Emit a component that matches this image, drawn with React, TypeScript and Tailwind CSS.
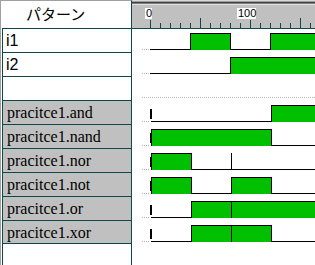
import React from "react"

type Step = [number, number]
interface Signal {
  name: string
  kind: "in" | "out" | "blank"
  steps?: Step[]
  glitch?: number[]
}

const signals: Signal[] = [
  { name: "i1", kind: "in", steps: [[0, 0], [40, 1], [80, 0], [120, 1]] },
  { name: "i2", kind: "in", steps: [[0, 0], [80, 1]] },
  { name: "", kind: "blank" },
  { name: "pracitce1.and", kind: "out", steps: [[1, 0], [121, 1]] },
  { name: "pracitce1.nand", kind: "out", steps: [[1, 1], [121, 0]] },
  { name: "pracitce1.nor", kind: "out", steps: [[1, 1], [41, 0]], glitch: [81] },
  { name: "pracitce1.not", kind: "out", steps: [[1, 1], [41, 0], [81, 1], [121, 0]] },
  { name: "pracitce1.or", kind: "out", steps: [[1, 0], [41, 1]], glitch: [81] },
  { name: "pracitce1.xor", kind: "out", steps: [[1, 0], [41, 1], [121, 0]], glitch: [81] },
]

const X0 = 150
const XEND = 315
const TOP0 = 28
const ROWH = 24

function Dots({ y, from, to }: { y: number; from: number; to: number }) {
  const d = []
  for (let x = from; x < to; x += 2) d.push(<rect key={x} x={x} y={y} width={1} height={1} fill="#b4b4b4" />)
  return <>{d}</>
}

function Wave({ sig, top }: { sig: Signal; top: number }) {
  const hi = top + 5
  const lo = top + 21
  if (sig.kind === "blank") return <Dots y={lo} from={142} to={XEND} />
  const steps = sig.steps!
  const green: React.ReactNode[] = []
  const black: React.ReactNode[] = []
  steps.forEach(([t, lvl], i) => {
    const x1 = X0 + t
    const x2 = i + 1 < steps.length ? X0 + steps[i + 1][0] : XEND
    if (lvl) {
      green.push(<rect key={"g" + i} x={x1} y={hi} width={x2 - x1} height={lo - hi + 1} fill="#00c000" />)
      black.push(<rect key={"t" + i} x={x1} y={hi} width={x2 - x1} height={1} fill="#000" />)
    } else {
      black.push(<rect key={"l" + i} x={x1} y={lo} width={x2 - x1} height={1} fill="#000" />)
    }
    if (i > 0 || lvl) black.push(<rect key={"v" + i} x={x1} y={hi} width={1} height={lo - hi + 1} fill="#000" />)
  })
  sig.glitch?.forEach((t) =>
    black.push(<rect key={"x" + t} x={X0 + t} y={hi} width={1} height={lo - hi + 1} fill="#000" />)
  )
  return (
    <g>
      <Dots y={lo} from={142} to={150} />
      {green}
      {black}
      {sig.kind === "out" && <rect x={150} y={top + 9} width={2} height={10} fill="#000" />}
    </g>
  )
}

function Ruler() {
  const ticks = []
  for (let k = 0; k <= 16; k++) {
    const x = X0 + k * 10 - 132
    const y1 = k % 10 === 0 ? 20 : k % 5 === 0 ? 18 : 23
    ticks.push(<rect key={k} x={x} y={y1} width={1} height={28 - y1} fill="#0c4a48" />)
  }
  return (
    <svg width={183} height={28} className="block">
      <rect x={0} y={0} width={183} height={28} fill="#c0c0c0" />
      <rect x={0} y={0} width={183} height={1} fill="#d8d8d8" />
      <rect x={0} y={1} width={183} height={1} fill="#a0a0a0" />
      <rect x={0} y={2} width={183} height={1} fill="#404040" />
      <rect x={0} y={3} width={183} height={1} fill="#808080" />
      <rect x={0} y={4} width={183} height={1} fill="#e0e0e0" />
      {ticks}
      <rect x={145 - 132} y={8} width={7} height={11} fill="#fff" />
      <text x={146 - 132} y={17} fontFamily="Liberation Sans, sans-serif" fontSize={11} fill="#000">0</text>
      <rect x={237 - 132} y={8} width={19} height={11} fill="#fff" />
      <text x={238 - 132} y={17} fontFamily="Liberation Sans, sans-serif" fontSize={11} fill="#000">100</text>
    </svg>
  )
}

export default function App() {
  return (
    <div className="flex w-[315px] h-[265px] bg-white overflow-hidden">
      <div className="w-[132px] h-full flex flex-col border-r border-r-[#0c4a48] border-l border-l-[#a0a0a0] border-t border-t-[#a0a0a0]">
        <div className="h-[27px] flex items-center pl-[25px] text-[15px] text-black font-['Noto_Sans_CJK_JP',sans-serif]">
          パターン
        </div>
        <div className="flex-1 ml-px border-l border-[#0c4a48] flex flex-col">
          {signals.map((s, i) => (
            <div
              key={i}
              className={`h-[24px] border-t border-[#0c4a48] flex items-center ${
                s.kind === "out" ? "bg-[#c0c0c0] pl-[4px] text-[16px] font-['Liberation_Serif',serif]" : "pl-[3px] text-[16px] font-['Liberation_Sans',sans-serif]"
              } ${i === signals.length - 1 ? "border-b" : ""} text-black leading-[23px]`}
            >
              {s.name}
            </div>
          ))}
        </div>
      </div>
      <div className="flex-1 flex flex-col">
        <div className="h-[29px] border-b border-[#0c4a48]">
          <Ruler />
        </div>
        <svg width={183} height={236} viewBox="132 29 183 236" className="block">
          {signals.map((s, i) => (
            <Wave key={i} sig={s} top={TOP0 + i * ROWH} />
          ))}
        </svg>
      </div>
    </div>
  )
}
